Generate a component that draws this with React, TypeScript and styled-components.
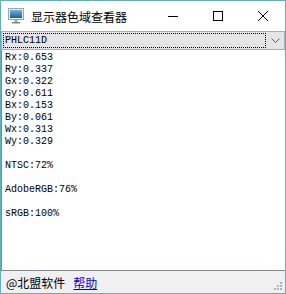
import styled, { createGlobalStyle } from 'styled-components';

const GlobalStyle = createGlobalStyle`
  html, body {
    margin: 0;
    padding: 0;
    background: #ffffff;
  }
`;

const readings = [
  'Rx:0.653',
  'Ry:0.337',
  'Gx:0.322',
  'Gy:0.611',
  'Bx:0.153',
  'By:0.061',
  'Wx:0.313',
  'Wy:0.329',
  '',
  'NTSC:72%',
  '',
  'AdobeRGB:76%',
  '',
  'sRGB:100%',
];

function MonitorIcon() {
  return (
    <svg width="16" height="16" viewBox="0 0 16 16">
      <defs>
        <linearGradient id="scr" x1="0" y1="0" x2="0" y2="1">
          <stop offset="0" stopColor="#6fb3dc" />
          <stop offset="1" stopColor="#1d5f98" />
        </linearGradient>
      </defs>
      <rect x="0.5" y="0.5" width="15" height="11" fill="#e9eef2" stroke="#9aa6ae" />
      <rect x="2" y="2" width="12" height="8" fill="url(#scr)" />
      <rect x="6.5" y="12" width="3" height="2" fill="#9aa6ae" />
      <rect x="4" y="14" width="8" height="1.5" fill="#7d8890" />
    </svg>
  );
}

function App() {
  return (
    <>
      <GlobalStyle />
      <Window>
        <TitleBar>
          <TitleIcon>
            <MonitorIcon />
          </TitleIcon>
          <Title>显示器色域查看器</Title>
          <Controls>
            <CtrlButton>
              <svg width="10" height="10" viewBox="0 0 10 10">
                <line x1="0" y1="5.5" x2="10" y2="5.5" stroke="#000" strokeWidth="1" />
              </svg>
            </CtrlButton>
            <CtrlButton>
              <svg width="10" height="10" viewBox="0 0 10 10">
                <rect x="0.5" y="0.5" width="9" height="9" fill="none" stroke="#000" strokeWidth="1" />
              </svg>
            </CtrlButton>
            <CtrlButton>
              <svg width="10" height="10" viewBox="0 0 10 10">
                <path d="M0 0 L10 10 M10 0 L0 10" stroke="#000" strokeWidth="1" />
              </svg>
            </CtrlButton>
          </Controls>
        </TitleBar>
        <Combo>
          <ComboField>
            <ComboText>PHLC11D</ComboText>
          </ComboField>
          <ComboArrow>
            <svg width="9" height="6" viewBox="0 0 9 6">
              <path d="M0.5 0.5 L4.5 4.5 L8.5 0.5" fill="none" stroke="#606060" strokeWidth="1" />
            </svg>
          </ComboArrow>
        </Combo>
        <Output>
          {readings.map((line, i) => (
            <Line key={i}>{line || '\u00a0'}</Line>
          ))}
        </Output>
        <StatusBar>
          <Credit>@北盟软件</Credit>
          <HelpLink href="#">帮助</HelpLink>
          <Grip>
            <svg width="10" height="10" viewBox="0 0 10 10">
              <g fill="#b4b4b4">
                <rect x="7" y="1" width="2" height="2" />
                <rect x="4" y="4" width="2" height="2" />
                <rect x="7" y="4" width="2" height="2" />
                <rect x="1" y="7" width="2" height="2" />
                <rect x="4" y="7" width="2" height="2" />
                <rect x="7" y="7" width="2" height="2" />
              </g>
            </svg>
          </Grip>
        </StatusBar>
      </Window>
    </>
  );
}

const Window = styled.div`
  width: 286px;
  height: 294px;
  box-sizing: border-box;
  border: 1px solid #5fb1c0;
  display: flex;
  flex-direction: column;
  background: #ffffff;
  overflow: hidden;
`;

const TitleBar = styled.div`
  height: 30px;
  display: flex;
  align-items: center;
  background: #ffffff;
  flex-shrink: 0;
`;

const TitleIcon = styled.div`
  width: 16px;
  height: 16px;
  margin-left: 7px;
  display: flex;
`;

const Title = styled.div`
  margin-left: 7px;
  font-family: 'Noto Sans CJK SC', sans-serif;
  font-size: 12px;
  color: #000000;
  flex: 1;
`;

const Controls = styled.div`
  display: flex;
  height: 100%;
`;

const CtrlButton = styled.div`
  width: 45px;
  height: 100%;
  display: flex;
  align-items: center;
  justify-content: center;
`;

const Combo = styled.div`
  height: 19px;
  display: flex;
  background: #e5e5e5;
  border: 1px solid #adadad;
  box-sizing: border-box;
  flex-shrink: 0;
`;

const ComboField = styled.div`
  flex: 1;
  padding: 1px;
  display: flex;
`;

const ComboText = styled.div`
  flex: 1;
  border: 1px dotted #000000;
  font-family: 'Liberation Mono', monospace;
  font-size: 10px;
  line-height: 13px;
  padding-left: 1px;
  color: #000000;
`;

const ComboArrow = styled.div`
  width: 17px;
  display: flex;
  align-items: center;
  justify-content: center;
`;

const Output = styled.div`
  flex: 1;
  border-left: 1px solid #828790;
  border-bottom: 1px solid #828790;
  padding: 2px 0 0 3px;
  background: #ffffff;
`;

const Line = styled.div`
  font-family: 'Liberation Mono', monospace;
  font-size: 10px;
  line-height: 12px;
  color: #000000;
  white-space: pre;
`;

const StatusBar = styled.div`
  height: 22px;
  display: flex;
  align-items: center;
  background: #f0f0f0;
  padding-left: 5px;
  flex-shrink: 0;
  position: relative;
`;

const Credit = styled.span`
  font-family: 'Noto Sans CJK SC', sans-serif;
  font-size: 12px;
  color: #000000;
`;

const HelpLink = styled.a`
  margin-left: 8px;
  font-family: 'Noto Sans CJK SC', sans-serif;
  font-size: 12px;
  color: #0000ee;
  text-decoration: underline;
`;

const Grip = styled.div`
  position: absolute;
  right: 2px;
  bottom: 2px;
  display: flex;
`;

export default App;
